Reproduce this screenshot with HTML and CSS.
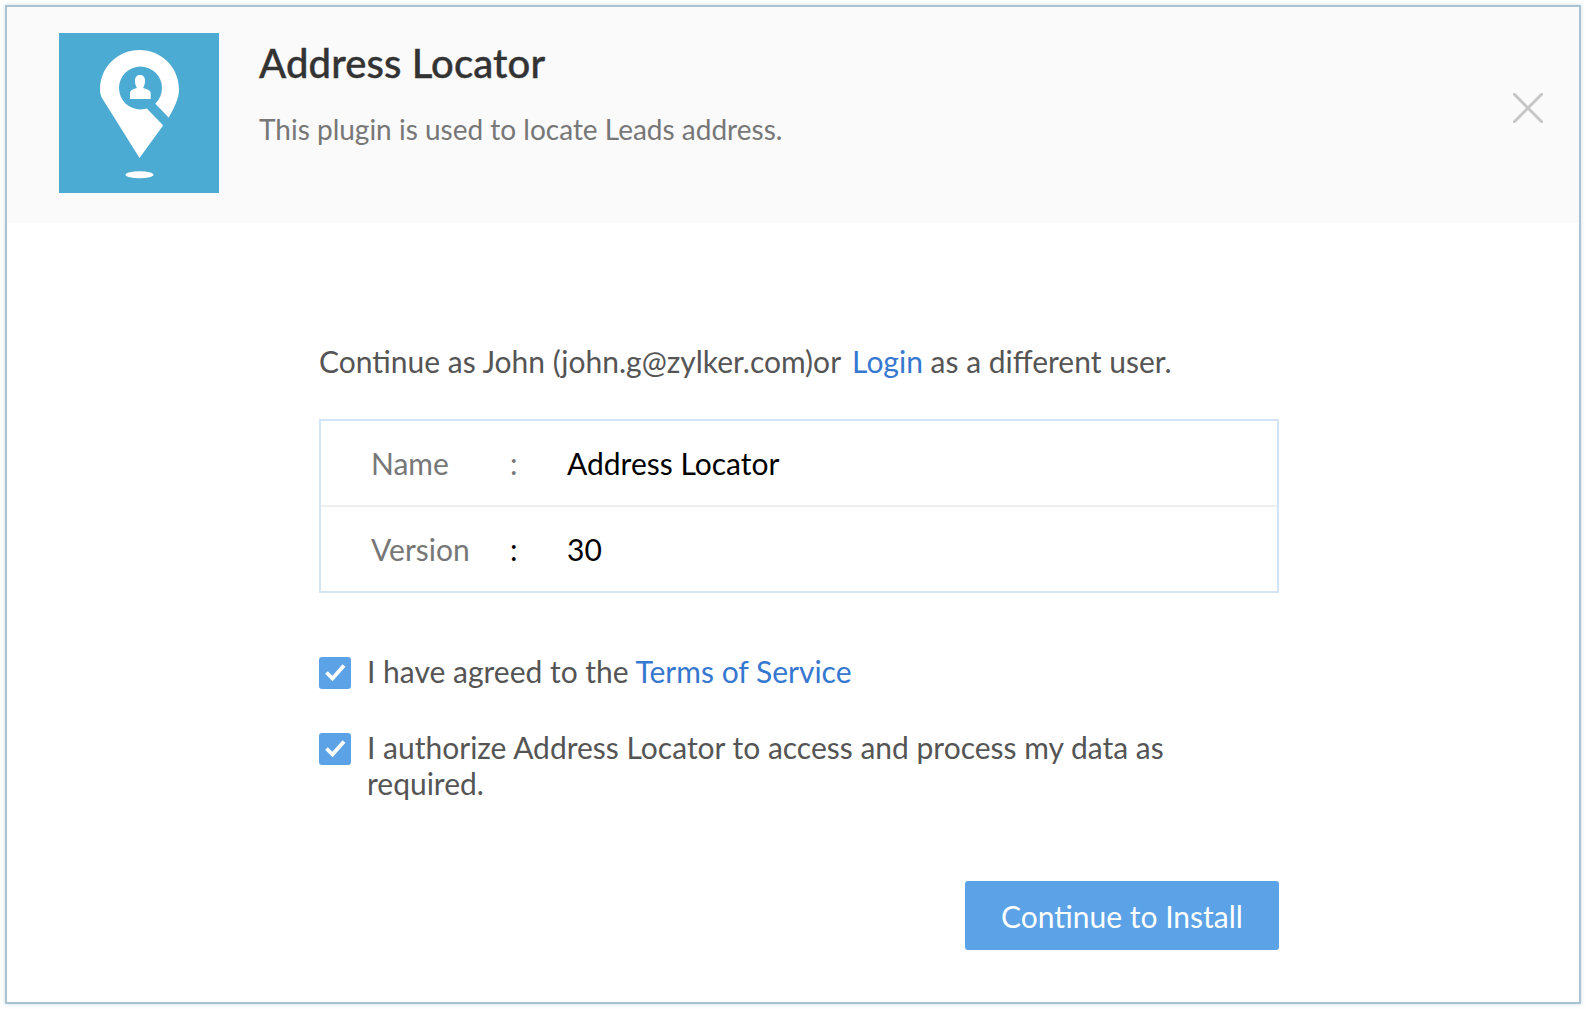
FILE: index.html
```html
<!DOCTYPE html>
<html lang="en">
<head>
<meta charset="utf-8">
<title>Address Locator</title>
<link rel="stylesheet" href="styles.css">
</head>
<body>
<main class="card">
  <header class="head">
    <svg class="logo" viewBox="0 0 160 160" aria-hidden="true">
      <rect width="160" height="160" fill="#4babd2"/>
      <path d="M80.500 17C58.500 17 41 34.500 41 56.500C41 60 41.700 62 43 65L80.500 125L109.500 85C115 75 120 66 120 56.500C120 34.500 102.500 17 80.500 17Z" fill="#fff"/>
      <circle cx="81.500" cy="55" r="21.500" fill="#4babd2"/>
      <path d="M91 72L121 103" stroke="#4babd2" stroke-width="9.500" fill="none"/>
      <path d="M71 60C71 57.500 73 56.500 78 55C76.500 53 76 50 76 47.500C76 44 78 42 81 42C84 42 86 44 86 47.500C86 50 85.500 53 84 55C89 56.500 91.700 57.500 91.700 60V66H71Z" fill="#fff"/>
      <ellipse cx="80.500" cy="141.700" rx="14" ry="3.500" fill="#fff"/>
    </svg>
    <div class="head-text">
      <h1 class="title">Address Locator</h1>
      <p class="sub">This plugin is used to locate Leads address.</p>
    </div>
    <button class="close" aria-label="Close">
      <svg viewBox="0 0 30 30" width="30" height="30" aria-hidden="true"><path d="M0 0L30 30M30 0L0 30" stroke="#c6c6c6" stroke-width="3" fill="none"/></svg>
    </button>
  </header>
  <section class="body">
    <p class="intro">Continue as John (john.g@zylker.com)or <a href="#" class="link login">Login</a> as a different user.</p>
    <div class="info">
      <div class="row"><span class="key">Name</span><span class="colon">:</span><span class="val">Address Locator</span></div>
      <div class="row row-last"><span class="key">Version</span><span class="colon colon-dark">:</span><span class="val">30</span></div>
    </div>
    <div class="check first">
      <svg class="box" viewBox="0 0 32 32" aria-hidden="true"><rect width="32" height="32" rx="3" fill="#5ca2e6"/><path d="M7.500 15.500L13.500 21.500L25 8.500" stroke="#fff" stroke-width="3.800" fill="none"/></svg>
      <span class="label">I have agreed to the <a href="#" class="link">Terms of Service</a></span>
    </div>
    <div class="check second">
      <svg class="box" viewBox="0 0 32 32" aria-hidden="true"><rect width="32" height="32" rx="3" fill="#5ca2e6"/><path d="M7.500 15.500L13.500 21.500L25 8.500" stroke="#fff" stroke-width="3.800" fill="none"/></svg>
      <span class="label">I authorize Address Locator to access and process my data as required.</span>
    </div>
    <div class="actions"><button class="cta">Continue to Install</button></div>
  </section>
</main>
</body>
</html>
```
FILE: styles.css
```css
* { box-sizing: border-box; }
html, body { margin: 0; background: #fff; }
body { padding: 5px; height: 1009px; overflow: hidden; font-family: Lato, "Liberation Sans", sans-serif; color: #555; }
.card { width: 1576px; height: 999px; border: 2px solid #a9c3d2; box-shadow: 0 0 4px rgba(169,195,210,.6); background: #fff; }
.head { height: 216px; background: #fafafa; display: flex; padding: 26px 0 0 52px; position: relative; }
.logo { width: 160px; height: 160px; flex: none; display: block; }
.head-text { margin-left: 40px; }
.title { margin: 6px 0 0; font-size: 40px; font-weight: 500; line-height: 48px; letter-spacing: .12px; color: #333; -webkit-text-stroke: .4px #333; }
.sub { margin: 22px 0 0; font-size: 28px; line-height: 40px; color: #777; }
.close { position: absolute; right: 36px; top: 86px; padding: 0; border: 0; background: none; width: 30px; height: 30px; }
.close svg { display: block; }
.body { padding: 113px 0 0 312px; width: 1272px; font-size: 30px; }
.intro { margin: 0; line-height: 50px; height: 50px; }
.login { margin-left: 4px; }
.link { color: #3677d0; text-decoration: none; }
.info { margin-top: 33px; width: 960px; height: 174px; border: 2px solid #d3e4f7; }
.row { height: 86px; display: flex; align-items: center; border-bottom: 2px solid #eee; color: #000; }
.row-last { border-bottom: 0; padding-bottom: 2px; }
.key { width: 139px; margin-left: 50px; color: #777; }
.colon { width: 57px; color: #777; }
.colon-dark { color: #000; }
.check { display: flex; gap: 16px; width: 880px; line-height: 36px; }
.first { margin-top: 64px; }
.second { margin-top: 44px; }
.label { margin-top: -4px; }
.box { width: 32px; height: 32px; flex: none; }
.actions { width: 960px; display: flex; justify-content: flex-end; margin-top: 80px; }
.cta { width: 314px; height: 69px; border: 0; border-radius: 3px; background: #5ca2e6; color: #fff; font: 30px Lato, "Liberation Sans", sans-serif; }
```
